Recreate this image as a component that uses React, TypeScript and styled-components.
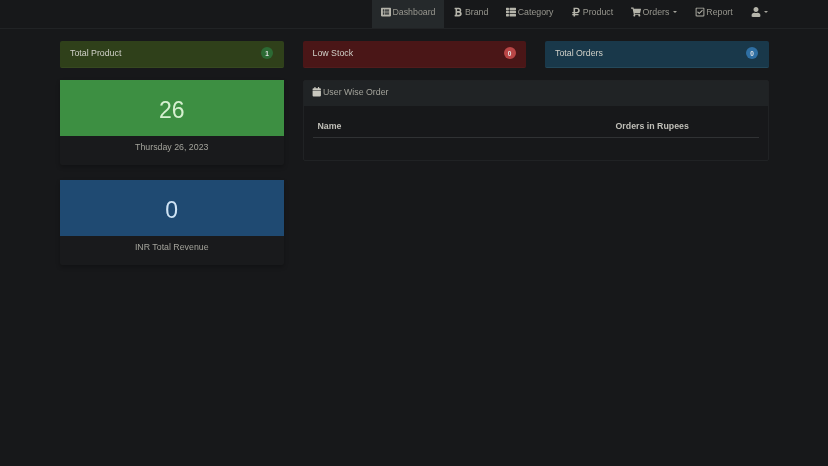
import React from "react";
import styled, { createGlobalStyle } from "styled-components";
import { FaBold, FaShoppingCart, FaRubleSign, FaUser, FaThList, FaRegCheckSquare, FaCalendar, FaListAlt } from "react-icons/fa";

const Global = createGlobalStyle`
  html, body { margin: 0; padding: 0; background: #17181a; }
  body { font-family: "Liberation Sans", Arial, sans-serif; font-size: 8.8px; color: #c8c8c8; }
  #root { min-height: 466px; }
`;

const Page = styled.div`
  width: 828px;
  height: 466px;
  overflow: hidden;
  background: #17181a;
  filter: blur(0.6px);
`;

const Nav = styled.nav`
  height: 28px;
  display: flex;
  justify-content: flex-end;
  padding-right: 51px;
  background: #17181a;
  border-bottom: 1px solid #212325;
`;

const NavItem = styled.a<{ $active?: boolean }>`
  display: flex;
  align-items: center;
  gap: 1.5px;
  padding: 0 8.95px 4px;
  height: 28px;
  box-sizing: border-box;
  font-size: 8.8px;
  color: #98978f;
  background: ${(p) => (p.$active ? "#25292b" : "transparent")};
  svg { color: #b5b4aa; width: 10px; height: 10px; }
`;

const Caret = styled.span`
  width: 0;
  height: 0;
  margin-left: 2px;
  border-left: 2px solid transparent;
  border-right: 2px solid transparent;
  border-top: 2px solid #a5a49c;
`;

const Content = styled.main`
  display: grid;
  grid-template-columns: 223.5px 223.5px 223.5px;
  grid-template-rows: 27px auto;
  column-gap: 19px;
  row-gap: 12px;
  padding: 12px 0 0 60px;
  align-items: start;
`;

const LeftColumn = styled.div`
  grid-row: span 2;
  display: flex;
  flex-direction: column;
  gap: 12px;
`;

const Stat = styled.div<{ $bg: string; $edge: string }>`
  height: 27px;
  box-sizing: border-box;
  padding: 0 10.5px 2px 10px;
  display: flex;
  align-items: center;
  justify-content: space-between;
  border-radius: 2px;
  background: ${(p) => p.$bg};
  border-bottom: 1px solid ${(p) => p.$edge};
  color: #d0d0c8;
  font-size: 8.8px;
`;

const Badge = styled.span<{ $bg: string }>`
  min-width: 12px;
  height: 12px;
  border-radius: 6px;
  background: ${(p) => p.$bg};
  color: #e4e4e4;
  font-size: 6.5px;
  font-weight: bold;
  display: flex;
  align-items: center;
  justify-content: center;
`;

const Card = styled.section`
  background: #191a1c;
  border-radius: 2px;
  box-shadow: 0 2px 4px rgba(0, 0, 0, 0.25);
  margin-bottom: 3px;
`;

const CardFill = styled.div<{ $bg: string; $fg: string }>`
  height: 56px;
  box-sizing: border-box;
  padding-top: 4px;
  background: ${(p) => p.$bg};
  color: ${(p) => p.$fg};
  font-size: 23px;
  display: flex;
  align-items: center;
  justify-content: center;
`;

const CardCaption = styled.div`
  height: 22px;
  padding-bottom: 7px;
  display: flex;
  align-items: center;
  justify-content: center;
  font-size: 8.8px;
  color: #a3a39b;
`;

const Panel = styled.section`
  grid-column: 2 / span 2;
  height: 81px;
  box-sizing: border-box;
  border: 1px solid #202224;
  border-radius: 2px;
  background: #17181a;
`;

const PanelHead = styled.header`
  height: 25px;
  box-sizing: border-box;
  padding: 0 8px 3px;
  display: flex;
  align-items: center;
  gap: 2px;
  background: #202325;
  color: #a3a39b;
  font-size: 8.8px;
  svg { width: 9.5px; height: 9.5px; color: #c9c8bf; }
`;

const Table = styled.div`
  margin: 0 9px;
  height: 32px;
  display: grid;
  grid-template-columns: 298px 1fr;
  align-items: center;
  padding: 8px 5px 0;
  box-sizing: border-box;
  border-bottom: 1px solid #303234;
  font-weight: bold;
  font-size: 8.8px;
  color: #c0bfb8;
`;

export default function App() {
  return (
    <Page>
      <Global />
      <Nav>
        <NavItem $active><FaListAlt />Dashboard</NavItem>
        <NavItem><FaBold />Brand</NavItem>
        <NavItem><FaThList />Category</NavItem>
        <NavItem><FaRubleSign />Product</NavItem>
        <NavItem><FaShoppingCart />Orders<Caret /></NavItem>
        <NavItem><FaRegCheckSquare />Report</NavItem>
        <NavItem><FaUser /><Caret /></NavItem>
      </Nav>
      <Content>
        <LeftColumn>
          <Stat $bg="#2f401a" $edge="#364820">Total Product<Badge $bg="#2c6a34">1</Badge></Stat>
          <Card>
            <CardFill $bg="#3d8f42" $fg="#d6f0d0">26</CardFill>
            <CardCaption>Thursday 26, 2023</CardCaption>
          </Card>
          <Card>
            <CardFill $bg="#1f4a72" $fg="#cfe4f5">0</CardFill>
            <CardCaption>INR Total Revenue</CardCaption>
          </Card>
        </LeftColumn>
        <Stat $bg="#4a1617" $edge="#521b1c">Low Stock<Badge $bg="#b94646">0</Badge></Stat>
        <Stat $bg="#19384a" $edge="#24485a">Total Orders<Badge $bg="#2f6fa3">0</Badge></Stat>
        <Panel>
          <PanelHead><FaCalendar />User Wise Order</PanelHead>
          <Table><span>Name</span><span>Orders in Rupees</span></Table>
        </Panel>
      </Content>
    </Page>
  );
}
